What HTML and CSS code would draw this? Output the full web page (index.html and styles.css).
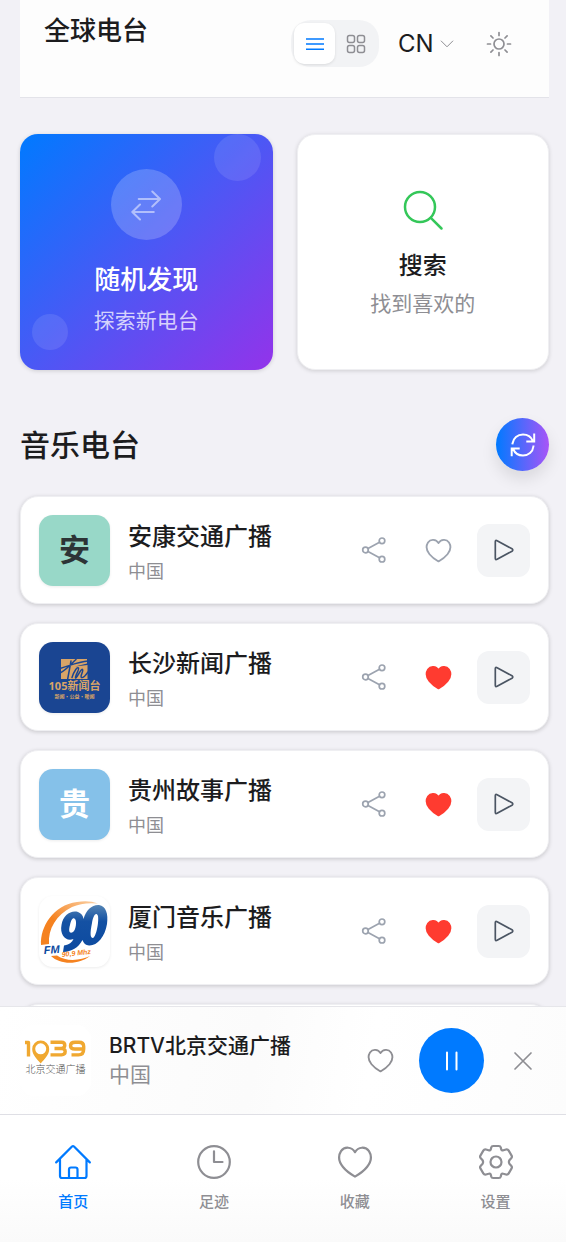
FILE: index.html
```html
<!DOCTYPE html>
<html lang="zh-CN">
<head>
<meta charset="utf-8">
<meta name="viewport" content="width=device-width, initial-scale=1">
<title>全球电台</title>
<link rel="stylesheet" href="styles.css">
</head>
<body>
<svg class="sprite" aria-hidden="true">
  <symbol id="heart" viewBox="0 0 36 36"><path d="M18 8.2C14.8 2.6 7.4 2.2 4 7.2C1 12 2 18 6 23C9 26.800 13.500 30 18 32.600C22.500 30 27 26.800 30 23C34 18 35 12 32 7.200C28.600 2.200 21.200 2.600 18 8.200Z"/></symbol>
  <symbol id="share" viewBox="0 0 28 28"><circle cx="5.500" cy="14" r="2.800"/><circle cx="22" cy="4.800" r="2.800"/><circle cx="22" cy="23.200" r="2.800"/><path d="M8 12.600 19.500 6.200M8 15.400 19.500 21.800"/></symbol>
  <symbol id="play" viewBox="0 0 24 24"><path d="M3.300 3.800V20.200Q3.300 22.200 5.100 21.200L20 13.200Q21.600 12 20 10.800L5.100 2.800Q3.300 1.800 3.300 3.800Z"/></symbol>
</svg>
<div class="app">
  <main class="content">
    <header class="topbar">
      <h1 class="brand">全球电台</h1>
      <div class="tools">
        <div class="view-toggle">
          <button class="view-btn active" type="button" aria-label="列表" aria-pressed="true">
            <svg width="18" height="18" viewBox="0 0 18 18"><path d="M0 4H18M0 9H18M0 14.200H18"/></svg>
          </button>
          <button class="view-btn" type="button" aria-label="网格" aria-pressed="false">
            <svg width="20" height="20" viewBox="0 0 20 20"><rect x="1.500" y="1.500" width="7" height="7" rx="2"/><rect x="11.500" y="1.500" width="7" height="7" rx="2"/><rect x="1.500" y="11.500" width="7" height="7" rx="2"/><rect x="11.500" y="11.500" width="7" height="7" rx="2"/></svg>
          </button>
        </div>
        <div class="language">
          <select class="language-select" aria-label="语言"><option>CN</option></select>
          <svg class="chevron" width="14" height="8" viewBox="0 0 14 8"><path d="M1.200 1 7 6.800 12.800 1"/></svg>
        </div>
        <button class="icon-btn theme" type="button" aria-label="主题">
          <svg width="26" height="26" viewBox="0 0 26 26"><circle cx="13" cy="13" r="5"/><path d="M13 1.500V4.500M13 21.500V24.500M1.500 13H4.500M21.500 13H24.500M4.900 4.900 7 7M19 19 21.100 21.100M4.900 21.100 7 19M19 7 21.100 4.900"/></svg>
        </button>
      </div>
    </header>

    <div class="actions">
      <button class="action random" type="button">
        <span class="bubble bubble-top"></span>
        <span class="bubble bubble-bottom"></span>
        <span class="random-icon">
          <svg width="30" height="32" viewBox="0 0 30 32"><path d="M7.700 10H28.500M21.300 2.500 29 10 21.300 17.500M22.800 23H1.500M9 15.500 1.300 23 9 30.500"/></svg>
        </span>
        <span class="random-title">随机发现</span>
        <span class="action-sub">探索新电台</span>
      </button>
      <button class="action search" type="button">
        <svg class="search-icon" width="42" height="42" viewBox="0 0 42 42"><circle cx="18" cy="18" r="15"/><path d="M28.800 28.800 39.500 39.500"/></svg>
        <span class="search-title">搜索</span>
        <span class="action-sub">找到喜欢的</span>
      </button>
    </div>

    <div class="section-head">
      <h2 class="section-title">音乐电台</h2>
      <button class="refresh" type="button" aria-label="刷新">
        <svg width="26" height="26" viewBox="0 0 26 26"><path d="M2.500 11.500C3.200 6 7.500 2.500 13 2.500C17.500 2.500 21.200 5.100 22.900 9M24.200 2.500V9.500H17.300M23.400 14.500C22.800 20 18.500 23.500 13 23.500C8.500 23.500 4.800 20.900 3.100 17M1.700 23.200V16.400H8.700"/></svg>
      </button>
    </div>

    <ul class="stations">
      <li class="station">
        <span class="cover mint">安</span>
        <div class="info"><h3 class="name">安康交通广播</h3><p class="country">中国</p></div>
        <div class="controls">
          <button class="icon-btn share" type="button" aria-label="分享"><svg width="28" height="28"><use href="#share"/></svg></button>
          <button class="icon-btn" type="button" aria-label="收藏"><svg width="27" height="27"><use href="#heart"/></svg></button>
          <button class="play" type="button" aria-label="播放"><svg width="24" height="24"><use href="#play"/></svg></button>
        </div>
      </li>
      <li class="station">
        <span class="cover navy">
          <svg width="71" height="71" viewBox="0 0 71 71">
            <path class="gold" d="M22 17H48V21.500L36 24.500 48.500 23V37H22Z"/>
            <path class="navy-line" d="M21 31C27 28 32 22 37 17.500M21 26.500C31 23.500 40 19.500 49 19M32 19 28.500 38M33 35.500C35 29 38.500 24.500 39.500 26S35.500 35 36.500 36S42 26 43.500 27.500S40.500 34.500 42.500 35.500 46.500 33.500 49 30"/>
            <text class="logo-105" x="35.500" y="48" text-anchor="middle">105新闻台</text>
            <text class="logo-105-sub" x="35.500" y="56" text-anchor="middle">新闻·公益·暖闻</text>
          </svg>
        </span>
        <div class="info"><h3 class="name">长沙新闻广播</h3><p class="country">中国</p></div>
        <div class="controls">
          <button class="icon-btn share" type="button" aria-label="分享"><svg width="28" height="28"><use href="#share"/></svg></button>
          <button class="icon-btn liked" type="button" aria-label="收藏"><svg width="27" height="27"><use href="#heart"/></svg></button>
          <button class="play" type="button" aria-label="播放"><svg width="24" height="24"><use href="#play"/></svg></button>
        </div>
      </li>
      <li class="station">
        <span class="cover sky">贵</span>
        <div class="info"><h3 class="name">贵州故事广播</h3><p class="country">中国</p></div>
        <div class="controls">
          <button class="icon-btn share" type="button" aria-label="分享"><svg width="28" height="28"><use href="#share"/></svg></button>
          <button class="icon-btn liked" type="button" aria-label="收藏"><svg width="27" height="27"><use href="#heart"/></svg></button>
          <button class="play" type="button" aria-label="播放"><svg width="24" height="24"><use href="#play"/></svg></button>
        </div>
      </li>
      <li class="station">
        <span class="cover white">
          <svg width="71" height="71" viewBox="0 0 71 71">
            <defs>
              <linearGradient id="swoosh" x1="0" y1="1" x2="1" y2="0"><stop offset="0.400" stop-color="#f58220"/><stop offset="1" stop-color="#fbd3a8"/></linearGradient>
              <linearGradient id="ninety" x1="0" y1="0" x2="0" y2="1"><stop offset="0" stop-color="#5484b4"/><stop offset="0.350" stop-color="#1451a3"/><stop offset="1" stop-color="#0c4aa0"/></linearGradient>
            </defs>
            <path fill="url(#swoosh)" d="M2 49C1 31 14 9 38 6Q50 4 59 7.500Q44 6 33 11C17 19 9 33 10 48Z"/>
            <path fill="#f58220" d="M12 60C21 69 40 69 51 60C42 64.500 27 66 18 59.500Z"/>
            <path fill="url(#ninety)" fill-rule="evenodd" d="M22.500 29C24 19 32 14 39 16Q44 18 44.500 23C47 14 53 8.500 60 9C67 10 69.500 18 68 28C66 41 58 50 50 49.500Q45 49 43.500 44C39 52 33 55.500 24 56L25 49.500C31 48.500 33 46 34.500 43C27 46 20.500 39 22.500 29ZM31 29C29 36 31 38 34 36C37 34 38 25 36 23C34 21 32 24 31 29ZM53 27C51 37 51 42 54 42C57 41 60 27 59 20C57 15 54 20 53 27Z"/>
            <text class="logo-fm" x="5" y="58" transform="rotate(-4 5 58)">FM</text>
            <text class="logo-mhz" x="23" y="61" transform="rotate(-6 23 61)">90,9 Mhz</text>
          </svg>
        </span>
        <div class="info"><h3 class="name">厦门音乐广播</h3><p class="country">中国</p></div>
        <div class="controls">
          <button class="icon-btn share" type="button" aria-label="分享"><svg width="28" height="28"><use href="#share"/></svg></button>
          <button class="icon-btn liked" type="button" aria-label="收藏"><svg width="27" height="27"><use href="#heart"/></svg></button>
          <button class="play" type="button" aria-label="播放"><svg width="24" height="24"><use href="#play"/></svg></button>
        </div>
      </li>
      <li class="station" aria-hidden="true"></li>
    </ul>
  </main>

  <section class="player">
    <span class="cover white player-cover">
      <svg width="71" height="71" viewBox="0 0 71 71">
        <g class="logo-1039"><path d="M5 17.500H8.500V31.500"/><path d="M30.500 17.300H41.500Q44.800 17.300 44.800 20.300T41.500 23.500H34.500M41.500 23.500Q45.200 23.500 45.200 26.600T41.500 29.900H30.500"/><path d="M63.700 24H55Q50.500 24 50.500 20.700T55 17.300H59Q63.700 17.300 63.700 21.500V24Q63.700 29.900 58.500 29.900H51.500"/></g>
        <path class="pin" fill-rule="evenodd" d="M20.700 38.500C17 34 12.200 30 12.200 24A8.500 8.500 0 0 1 29.200 24C29.200 30 24.500 34 20.700 38.500ZM20.700 29.300A5.500 5.500 0 1 0 20.700 18.300A5.500 5.500 0 1 0 20.700 29.300Z"/>
        <text class="logo-traffic" x="35.500" y="48" text-anchor="middle">北京交通广播</text>
      </svg>
    </span>
    <div class="info now"><p class="now-name">BRTV北京交通广播</p><p class="now-country">中国</p></div>
    <div class="player-controls">
      <button class="icon-btn gray" type="button" aria-label="收藏"><svg width="27" height="27"><use href="#heart"/></svg></button>
      <button class="pause" type="button" aria-label="暂停"><svg width="20" height="20" viewBox="0 0 20 20"><path d="M5 1.500V18.500M14.500 1.500V18.500"/></svg></button>
      <button class="icon-btn gray close" type="button" aria-label="关闭"><svg width="20" height="20" viewBox="0 0 20 20"><path d="M2 2 18 18M18 2 2 18"/></svg></button>
    </div>
  </section>

  <nav class="tabs">
    <a class="tab current" href="#home" aria-current="page">
      <svg width="36" height="36" viewBox="0 0 36 36"><path d="M1.200 18.400 17 2.500Q18 1.600 19 2.500L34.800 18.400M5 15.500V32Q5 34 7 34H29.500Q31.500 34 31.500 32V15.500M14 34V25.500Q14 23.500 16 23.500H20.500Q22.500 23.500 22.500 25.500V34"/></svg>
      <span>首页</span>
    </a>
    <a class="tab" href="#history">
      <svg width="36" height="36" viewBox="0 0 36 36"><circle cx="18" cy="18" r="15.800"/><path d="M18 7.300V18H26.500"/></svg>
      <span>足迹</span>
    </a>
    <a class="tab" href="#favorites">
      <svg width="36" height="36"><use href="#heart"/></svg>
      <span>收藏</span>
    </a>
    <a class="tab" href="#settings">
      <svg width="36" height="36" viewBox="-18 -18 36 36"><circle r="5.500"/><path d="M-2.800-16H2.800Q4.400-16 4.800-14.400L5.100-13Q5.500-11.200 7.400-11.800L10-12.500Q11.800-12.900 12.700-11.400L15.600-6.400Q16.400-5 15.200-3.800L13.600-2Q12.200 0 13.600 2L15.200 3.800Q16.400 5 15.600 6.400L12.700 11.400Q11.800 12.900 10 12.500L7.400 11.800Q5.500 11.200 5.100 13L4.800 14.400Q4.400 16 2.800 16H-2.800Q-4.400 16-4.800 14.400L-5.100 13Q-5.500 11.200-7.400 11.800L-10 12.500Q-11.800 12.900-12.700 11.400L-15.600 6.400Q-16.400 5-15.200 3.800L-13.600 2Q-12.200 0-13.600-2L-15.200-3.800Q-16.400-5-15.600-6.400L-12.700-11.400Q-11.800-12.900-10-12.500L-7.400-11.800Q-5.500-11.200-5.100-13L-4.800-14.400Q-4.400-16-2.800-16Z"/></svg>
      <span>设置</span>
    </a>
  </nav>
</div>
</body>
</html>
```
FILE: styles.css
```css
* { box-sizing: border-box; }

body {
  margin: 0;
  background: #f2f1f6;
  color: #1c1c1e;
  font-family: Inter, "Noto Sans CJK SC", sans-serif;
}

h1, h2, h3, p, ul { margin: 0; padding: 0; }

button, select {
  margin: 0;
  padding: 0;
  border: 0;
  background: none;
  color: inherit;
  font: inherit;
}

svg {
  display: block;
  flex: none;
  fill: none;
  stroke: currentColor;
  stroke-linecap: round;
  stroke-linejoin: round;
}

svg text { stroke: none; }

.sprite { position: absolute; width: 0; height: 0; }

.app {
  display: flex;
  flex-direction: column;
  height: 100vh;
}

.content {
  flex: 1;
  min-height: 0;
  padding: 0 17px 0 20px;
  overflow: hidden auto;
  scrollbar-width: none;
}

/* Top bar */
.topbar {
  display: flex;
  justify-content: space-between;
  align-items: flex-start;
  padding: 11px 36px 30px 24px;
  background: #fdfdfd;
  border-bottom: 1px solid #e3e3e9;
}

.brand { font-size: 26px; line-height: 40px; font-weight: 500; }

.tools { display: flex; align-items: center; padding-top: 9px; }

.view-toggle {
  display: flex;
  padding: 3px;
  border-radius: 20px;
  background: #f2f3f5;
}

.view-btn {
  display: grid;
  place-items: center;
  width: 41px;
  height: 41px;
  border-radius: 10px;
  color: #8e8e93;
}

.view-btn svg { stroke-width: 1.5; }

.view-btn.active {
  background: #fff;
  color: #007aff;
  box-shadow: 0 1px 3px rgba(0, 0, 0, .1);
}

.language { display: grid; align-items: center; margin-left: 19px; }

.language-select {
  grid-area: 1 / 1;
  appearance: none;
  width: 56px;
  font-size: 24px;
  line-height: 32px;
}

.chevron {
  grid-area: 1 / 1;
  justify-self: end;
  color: #8e8e93;
  pointer-events: none;
}

.icon-btn {
  display: grid;
  place-items: center;
  width: 28px;
  height: 53px;
  color: #9ca3af;
}

.icon-btn svg { stroke-width: 2.4; }
.share svg { stroke-width: 1.7; }
.close svg { stroke-width: 1.7; }

.theme { height: 28px; margin-left: 31px; color: #8e8e93; }
.theme svg { stroke-width: 1.7; }

/* Action cards */
.actions {
  display: grid;
  grid-template-columns: 1fr 1fr;
  gap: 24px;
  margin-top: 36px;
}

.action {
  position: relative;
  display: flex;
  flex-direction: column;
  align-items: center;
  min-height: 236px;
  border-radius: 18px;
  box-shadow: 0 1px 4px rgba(0, 0, 0, .15);
}

.random {
  padding: 35px 12px 30px;
  overflow: hidden;
  background: linear-gradient(135deg, #007aff 0%, #4b58f5 50%, #9333ea 100%);
  color: #fff;
}

.bubble {
  position: absolute;
  border-radius: 50%;
  background: rgba(255, 255, 255, .1);
}

.bubble-top { top: 0; right: 12px; width: 47px; height: 47px; }
.bubble-bottom { bottom: 20px; left: 12px; width: 36px; height: 36px; }

.random-icon {
  display: grid;
  place-items: center;
  width: 71px;
  height: 71px;
  border-radius: 50%;
  background: rgba(255, 255, 255, .2);
  color: rgba(255, 255, 255, .5);
}

.random-icon svg { stroke-width: 2; }

.random-title { margin-top: 20px; font-size: 26px; line-height: 40px; font-weight: 500; }

.action-sub { font-size: 21px; line-height: 30px; color: #8e8e93; }
.random .action-sub { margin-top: 6px; color: rgba(255, 255, 255, .75); }

.search { padding: 54px 12px 40px; border: 1px solid #efeff2; background: #fff; }
.search-icon { color: #34c759; stroke-width: 2.5; }
.search-title { margin-top: 17px; font-size: 24px; line-height: 36px; font-weight: 500; }
.search .action-sub { margin-top: 5px; }

/* Station list */
.section-head {
  display: flex;
  justify-content: space-between;
  align-items: center;
  margin-top: 48px;
}

.section-title { font-size: 30px; line-height: 44px; font-weight: 500; }

.refresh {
  display: grid;
  place-items: center;
  width: 53px;
  height: 53px;
  border-radius: 50%;
  background: linear-gradient(90deg, #007aff, #a855f7);
  color: #fff;
  box-shadow: 0 8px 16px rgba(0, 0, 0, .1);
}

.refresh svg { stroke-width: 2; stroke-linecap: square; stroke-linejoin: miter; }

.stations {
  display: flex;
  flex-direction: column;
  gap: 19px;
  margin-top: 25px;
  list-style: none;
}

.station {
  display: flex;
  align-items: center;
  gap: 18px;
  min-height: 108px;
  padding: 17px 18px;
  border: 1px solid #efeff2;
  border-radius: 18px;
  background: #fff;
  box-shadow: 0 1px 4px rgba(0, 0, 0, .18);
}

.cover {
  display: grid;
  place-items: center;
  flex: none;
  width: 71px;
  height: 71px;
  overflow: hidden;
  border-radius: 14px;
  box-shadow: 0 1px 3px rgba(0, 0, 0, .08);
  font-size: 31px;
  line-height: 44px;
  font-weight: 700;
}

.mint { background: #98d8c8; color: #2d3436; }
.navy { background: #1a4592; }
.sky { background: #85c1e9; color: #fff; }
.white { background: #fff; }

.info { flex: 1; min-width: 0; padding-top: 4px; }
.name { font-size: 24px; line-height: 36px; font-weight: 500; }
.country { font-size: 18px; line-height: 27px; margin-top: 3px; color: #8e8e93; }

.controls { display: flex; align-items: center; gap: 36px; }
.controls .play { margin-left: -11px; }

.liked { color: #ff3b30; }
.liked svg { fill: currentColor; }

.play {
  display: grid;
  place-items: center;
  width: 53px;
  height: 53px;
  border-radius: 12px;
  background: #f3f4f6;
  color: #4b5563;
}

.play svg { stroke-width: 1.7; }

.gold { fill: #d9a467; stroke: none; }
.navy-line { stroke: #1a4592; stroke-width: 1.5; }
.logo-105 { fill: #d9a467; font: 700 11px/1 "Open Sans", "Noto Sans CJK SC", sans-serif; }
.logo-105-sub { fill: #d9a467; font: 700 5px/1 "Noto Sans CJK SC", sans-serif; }
.cover path[fill^="url"], .cover path[fill^="#"] { stroke: none; }
.logo-fm { fill: #0c4aa0; font: italic 700 11px "Liberation Sans", sans-serif; }
.logo-mhz { fill: #f58220; font: italic 700 7px "Liberation Sans", sans-serif; }
.logo-1039 { stroke: #f0a830; stroke-width: 3.4; stroke-linecap: butt; }
.pin { fill: #f0a830; stroke: none; }
.logo-traffic { fill: #555; font: 300 10px "Noto Sans CJK SC", sans-serif; }

/* Player */
.player {
  display: flex;
  align-items: center;
  gap: 18px;
  padding: 18px 29px 18px 20px;
  border-top: 1px solid #e6e6ea;
  background: linear-gradient(100deg, #fff, #fbfbfb 45%, #fff 65%, #fcfcfc);
}

.player-cover { box-shadow: none; }
.now { padding: 0 0 2px; }
.now-name { font-size: 21px; line-height: 30px; font-weight: 500; }
.now-country { font-size: 21px; line-height: 28px; color: #8e8e93; }

.player-controls { display: flex; align-items: center; gap: 25px; }
.gray { color: #8e8e93; }

.pause {
  display: grid;
  place-items: center;
  width: 65px;
  height: 65px;
  border-radius: 50%;
  background: #007aff;
  color: #fff;
}

.pause svg { stroke-width: 2; }

/* Tabs */
.tabs {
  display: grid;
  grid-template-columns: repeat(4, 1fr);
  padding: 29px 0 29px 3px;
  border-top: 1px solid #dfdfe5;
  background: linear-gradient(#fff 50%, #fafafa);
}

.tab {
  display: flex;
  flex-direction: column;
  align-items: center;
  gap: 11px;
  color: #8e8e93;
  font-size: 15px;
  line-height: 22px;
  font-weight: 500;
  text-decoration: none;
}

.tab svg { stroke-width: 2.2; }
.current { color: #007aff; }
```
